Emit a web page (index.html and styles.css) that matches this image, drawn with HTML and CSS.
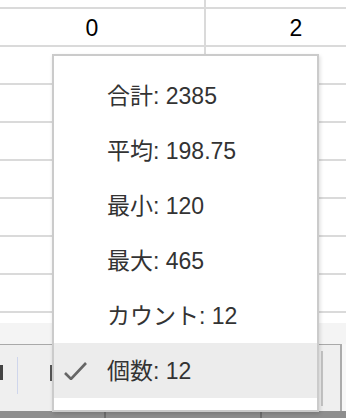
FILE: index.html
```html
<!DOCTYPE html>
<html lang="ja">
<head>
<meta charset="utf-8">
<link rel="stylesheet" href="styles.css">
</head>
<body>
<div class="page">
  <div class="sheet">
    <div class="row row-top"><div class="cell c1"></div><div class="cell c2"></div></div>
    <div class="row"><div class="cell c1 num">0</div><div class="cell c2 num">2</div></div>
    <div class="row"><div class="cell c1"></div><div class="cell c2"></div></div>
    <div class="row"><div class="cell c1"></div><div class="cell c2"></div></div>
    <div class="row"><div class="cell c1"></div><div class="cell c2"></div></div>
    <div class="row"><div class="cell c1"></div><div class="cell c2"></div></div>
    <div class="row"><div class="cell c1"></div><div class="cell c2"></div></div>
    <div class="row"><div class="cell c1"></div><div class="cell c2"></div></div>
    <div class="row"><div class="cell c1"></div><div class="cell c2"></div></div>
    <div class="row-partial"></div>
  </div>
  <div class="band"></div>
  <div class="toolbar">
    <div class="tb-main">
      <span class="tb-glyph"></span>
      <span class="tb-sep"></span>
      <span class="tb-bar"></span>
      <span class="tb-box"></span>
    </div>
    <div class="tb-side"></div>
  </div>
  <div class="bottom">
    <span class="seg seg1"></span>
    <span class="seg seg2"></span>
    <span class="seg seg3"></span>
  </div>

  <div class="menu">
    <div class="item"><svg class="check" viewBox="0 0 24 18"><path d="M2 11 L8 17 L23 1"/></svg><span>合計: 2385</span></div>
    <div class="item"><svg class="check" viewBox="0 0 24 18"><path d="M2 11 L8 17 L23 1"/></svg><span>平均: 198.75</span></div>
    <div class="item"><svg class="check" viewBox="0 0 24 18"><path d="M2 11 L8 17 L23 1"/></svg><span>最小: 120</span></div>
    <div class="item"><svg class="check" viewBox="0 0 24 18"><path d="M2 11 L8 17 L23 1"/></svg><span>最大: 465</span></div>
    <div class="item"><svg class="check" viewBox="0 0 24 18"><path d="M2 11 L8 17 L23 1"/></svg><span>カウント: 12</span></div>
    <div class="item selected"><svg class="check" viewBox="0 0 24 18"><path d="M2 11 L8 17 L23 1"/></svg><span>個数: 12</span></div>
  </div>
</div>
</body>
</html>
```

FILE: styles.css
```css
* { box-sizing: border-box; }
html, body { margin: 0; padding: 0; }
body {
  width: 346px;
  height: 418px;
  overflow: hidden;
  background: #fff;
  font-family: "Liberation Sans", Arial, "Noto Sans CJK JP", sans-serif;
}
.page {
  position: relative;
  width: 346px;
  height: 418px;
  overflow: hidden;
  display: flex;
  flex-direction: column;
}
.sheet { display: flex; flex-direction: column; }
.row {
  display: flex;
  height: 38px;
  border-bottom: 2px solid #dadada;
}
.row-top { height: 9px; }
.cell { height: 100%; }
.c1 { width: 206px; border-right: 2px solid #dadada; }
.c2 { flex: 1; }
.num {
  font-size: 23px;
  color: #000;
  display: flex;
  align-items: center;
  justify-content: center;
}
.c1.num { padding-right: 20px; padding-top: 2px; }
.c2.num { padding-left: 40px; padding-top: 2px; }
.row-partial { height: 10px; }
.band { height: 21px; background: #f4f4f4; }
.toolbar { display: flex; height: 67px; }
.tb-main {
  flex: 1;
  border-top: 1px solid #a9a9a9;
  background: #efefef;
  display: flex;
  align-items: flex-start;
}
.tb-glyph {
  width: 3px; height: 15px; margin-top: 20px;
  background: #444;
}
.tb-sep {
  width: 1px; height: 37px; margin-top: 12px; margin-left: 14px;
  background: #cfd6ec;
}
.tb-bar {
  width: 2px; height: 16px; margin-top: 20px; margin-left: 32px;
  background: #555;
}
.tb-box {
  width: 2px; height: 55px; margin-top: 6px; margin-left: auto; margin-right: 17px;
  background: #c4c4c4;
}
.tb-side {
  width: 6px;
  border-left: 2px solid #ababab;
  background: #f7f7f7;
}
.bottom {
  height: 7px;
  display: flex;
  background: #8e8e8e;
}
.seg { height: 100%; }
.seg1 { width: 106px; border-right: 2px solid #6e6e6e; }
.seg2 { width: 156px; border-right: 2px solid #6e6e6e; }
.seg3 { flex: 1; }

.menu {
  position: absolute;
  left: 52px;
  top: 54px;
  width: 267px;
  height: 358px;
  background: #fff;
  border: 2px solid #cbcbcb;
  box-shadow: 1px 2px 4px rgba(0,0,0,0.15);
  padding: 12px 0 12px;
  display: flex;
  flex-direction: column;
  font-family: "Liberation Sans", Arial, "Noto Sans CJK JP", sans-serif;
  font-size: 23px;
  color: #333;
}
.item {
  height: 55px;
  display: flex;
  align-items: center;
  padding-left: 9px;
  padding-bottom: 4px;
}
.check {
  width: 24px;
  height: 18px;
  margin-right: 20px;
  margin-top: 4px;
  visibility: hidden;
  flex: none;
}
.check path {
  fill: none;
  stroke: #666;
  stroke-width: 2.6;
}
.selected { background: #ececec; }
.selected .check { visibility: visible; }
```
